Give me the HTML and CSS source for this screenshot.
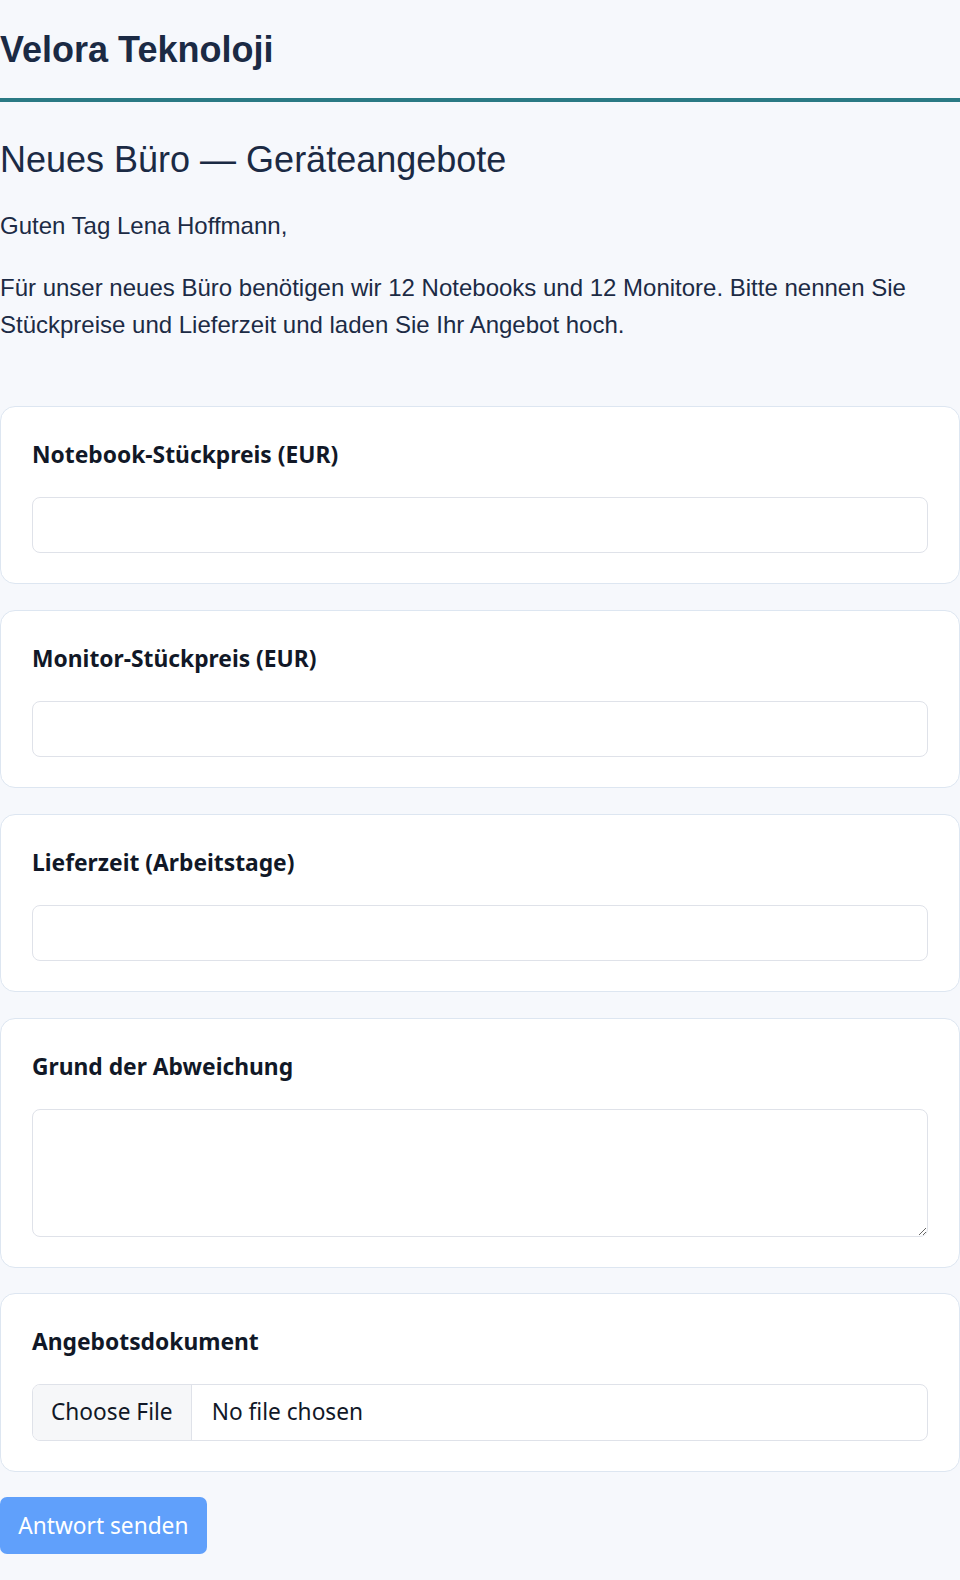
FILE: index.html
```html
<!DOCTYPE html>
<html lang="de">
<head>
<meta charset="utf-8">
<title>Velora Teknoloji</title>
<link rel="stylesheet" href="styles.css">
</head>
<body>
<header class="site-header">
  <h1 class="brand">Velora Teknoloji</h1>
</header>
<main class="page">
  <h2 class="title">Neues Büro — Geräteangebote</h2>
  <p class="greeting">Guten Tag Lena Hoffmann,</p>
  <p class="intro">Für unser neues Büro benötigen wir 12 Notebooks und 12 Monitore. Bitte nennen Sie Stückpreise und Lieferzeit und laden Sie Ihr Angebot hoch.</p>
  <form class="form">
    <div class="card">
      <label class="label" for="f1">Notebook-Stückpreis (EUR)</label>
      <input class="field" id="f1" type="text">
    </div>
    <div class="card">
      <label class="label" for="f2">Monitor-Stückpreis (EUR)</label>
      <input class="field" id="f2" type="text">
    </div>
    <div class="card">
      <label class="label" for="f3">Lieferzeit (Arbeitstage)</label>
      <input class="field" id="f3" type="text">
    </div>
    <div class="card">
      <label class="label" for="f4">Grund der Abweichung</label>
      <textarea class="field area" id="f4"></textarea>
    </div>
    <div class="card">
      <label class="label" for="f5">Angebotsdokument</label>
      <input class="field file" id="f5" type="file">
    </div>
    <div class="actions">
      <button class="submit" type="button">Antwort senden</button>
    </div>
  </form>
</main>
</body>
</html>
```
FILE: styles.css
```css
html {
  margin: 0;
  padding: 0;
  background: #f6f8fc;
}
body {
  margin: 0;
  padding: 0;
  background: #f6f8fc;
  color: #1c2b45;
  font-family: "Liberation Sans", Arial, sans-serif;
}
.site-header {
  padding: 29.5px 0 28.5px;
  border-bottom: 4px solid #2a7a84;
}
.brand {
  margin: 0;
  font-size: 36px;
  line-height: 40px;
  font-weight: 700;
  color: #1b2a44;
}
.title {
  margin: 38px 0 0;
  font-size: 36px;
  line-height: 40px;
  font-weight: 400;
  color: #1b2a44;
}
.greeting {
  margin: 26.5px 0 0;
  font-size: 24px;
  line-height: 37.3px;
}
.intro {
  margin: 25.4px 0 0;
  font-size: 24px;
  line-height: 37.3px;
}
.form {
  margin-top: 62.3px;
  display: flex;
  flex-direction: column;
  gap: 25.8px;
}
.card {
  background: #ffffff;
  border: 1px solid #dde6f1;
  border-radius: 15px;
  padding: 31px 31px 30px;
  display: flex;
  flex-direction: column;
}
.label {
  font-family: "Noto Sans", "Open Sans", sans-serif;
  font-weight: 700;
  font-size: 22.8px;
  line-height: 34px;
  color: #111827;
  margin-bottom: 25px;
}
.field {
  box-sizing: border-box;
  width: 100%;
  height: 56.2px;
  margin: 0;
  border: 1.5px solid #dfe2e9;
  border-radius: 8px;
  background: #fff;
  font-family: "Noto Sans", "Open Sans", sans-serif;
  font-size: 22.7px;
  color: #111827;
  padding: 0 18px;
}
.area {
  height: 127.5px;
  resize: vertical;
  padding: 12px 18px;
}
.file {
  padding: 0;
  line-height: 53px;
  overflow: hidden;
}
.file::file-selector-button {
  font-family: "Noto Sans", "Open Sans", sans-serif;
  font-size: 22.7px;
  color: #111827;
  background: #f6f7f9;
  border: 0;
  border-right: 1.5px solid #dfe2e9;
  height: 56px;
  padding: 0 18px;
  margin: -2px 20px 0 0;
  border-radius: 0;
}
.actions {
  display: flex;
}
.submit {
  font-family: "Noto Sans", "Open Sans", sans-serif;
  font-size: 22.7px;
  color: #ffffff;
  background: #60a0fb;
  border: 0;
  border-radius: 7px;
  height: 56.6px;
  width: 206.7px;
  padding: 0;
}
```
